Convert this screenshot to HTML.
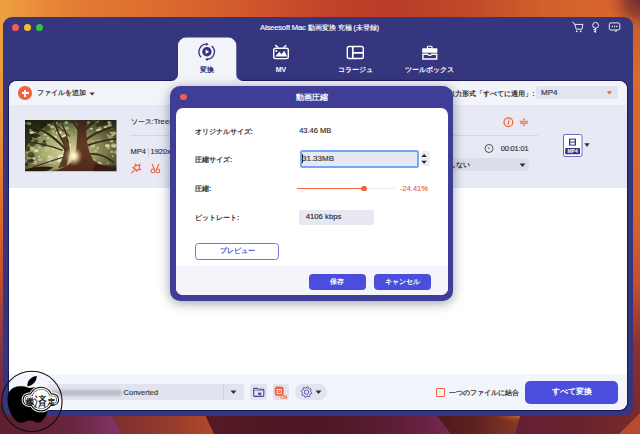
<!DOCTYPE html>
<html><head><meta charset="utf-8">
<style>
*{margin:0;padding:0;box-sizing:border-box}
html,body{width:640px;height:434px;overflow:hidden;font-family:"Liberation Sans",sans-serif;}
body{position:relative;background:#7a2a3a}
.a{position:absolute}
.t{position:absolute;white-space:nowrap;line-height:1;-webkit-text-stroke:0.15px currentColor}
.t[style*="bold"]{-webkit-text-stroke:0}
.tl{position:absolute;width:7px;height:7px;border-radius:50%}
.btn{position:absolute;background:#4b4edd;color:#fff;border-radius:4px;font-size:7px;text-align:center;font-weight:bold}
</style></head><body>
<!-- background wallpaper -->
<svg class="a" style="left:0;top:0" width="640" height="434" viewBox="0 0 640 434">
  <defs>
    <linearGradient id="gTop" x1="0" y1="0" x2="1" y2="0">
      <stop offset="0" stop-color="#eea040"/>
      <stop offset="0.06" stop-color="#e98c3a"/>
      <stop offset="0.125" stop-color="#e27a33"/>
      <stop offset="0.25" stop-color="#dc6c2e"/>
      <stop offset="0.4" stop-color="#d0552c"/>
      <stop offset="0.5" stop-color="#c4442a"/>
      <stop offset="0.62" stop-color="#b93c28"/>
      <stop offset="0.75" stop-color="#c24c2a"/>
      <stop offset="0.85" stop-color="#d0602c"/>
      <stop offset="0.94" stop-color="#d8662c"/>
      <stop offset="1" stop-color="#d0602c"/>
    </linearGradient>
    <linearGradient id="gLeft" x1="0" y1="0" x2="0" y2="1">
      <stop offset="0" stop-color="#eea040"/>
      <stop offset="0.25" stop-color="#e8903a"/>
      <stop offset="0.4" stop-color="#e0722f"/>
      <stop offset="0.5" stop-color="#da602a"/>
      <stop offset="0.6" stop-color="#c84e30"/>
      <stop offset="0.7" stop-color="#a04040"/>
      <stop offset="0.8" stop-color="#7e3448"/>
      <stop offset="0.9" stop-color="#70283a"/>
      <stop offset="1" stop-color="#5e1e2c"/>
    </linearGradient>
    <linearGradient id="gRight" x1="0" y1="0" x2="0" y2="1">
      <stop offset="0" stop-color="#d0602c"/>
      <stop offset="0.08" stop-color="#d86a2c"/>
      <stop offset="0.45" stop-color="#d4642c"/>
      <stop offset="0.62" stop-color="#c05030"/>
      <stop offset="0.78" stop-color="#8a3030"/>
      <stop offset="0.92" stop-color="#7a2a2c"/>
      <stop offset="1" stop-color="#8a3530"/>
    </linearGradient>
    <radialGradient id="gCorner" cx="1" cy="0" r="1">
      <stop offset="0" stop-color="#6a2a32" stop-opacity="1"/>
      <stop offset="0.25" stop-color="#8a3a30" stop-opacity="0.8"/>
      <stop offset="0.55" stop-color="#c05030" stop-opacity="0"/>
    </radialGradient>
    <radialGradient id="gHi" cx="0.98" cy="0.3" r="0.35">
      <stop offset="0" stop-color="#e08a30" stop-opacity="1"/>
      <stop offset="0.5" stop-color="#b85a2a" stop-opacity="0.6"/>
      <stop offset="1" stop-color="#8a3c26" stop-opacity="0"/>
    </radialGradient>
    <linearGradient id="gPur" x1="0" y1="0" x2="122" y2="0" gradientUnits="userSpaceOnUse">
      <stop offset="0" stop-color="#5e1e2e"/>
      <stop offset="0.6" stop-color="#682640"/>
      <stop offset="1" stop-color="#82366a"/>
    </linearGradient>
    <linearGradient id="gRB" x1="515" y1="0" x2="640" y2="0" gradientUnits="userSpaceOnUse">
      <stop offset="0" stop-color="#642034"/>
      <stop offset="0.5" stop-color="#68222c"/>
      <stop offset="1" stop-color="#7a2a2a"/>
    </linearGradient>
    <linearGradient id="gOr" x1="0" y1="0" x2="1" y2="0">
      <stop offset="0" stop-color="#7a2c32"/>
      <stop offset="0.6" stop-color="#963c2c"/>
      <stop offset="1" stop-color="#b24a28"/>
    </linearGradient>
    <linearGradient id="gMar" x1="0" y1="0" x2="1" y2="0">
      <stop offset="0" stop-color="#561a26"/>
      <stop offset="0.45" stop-color="#4c1622"/>
      <stop offset="0.8" stop-color="#5e1e38"/>
      <stop offset="1" stop-color="#742a52"/>
    </linearGradient>
    <linearGradient id="gBr" x1="0" y1="0" x2="1" y2="0">
      <stop offset="0" stop-color="#4a1618"/>
      <stop offset="0.5" stop-color="#5e2220"/>
      <stop offset="0.85" stop-color="#7e3424"/>
      <stop offset="1" stop-color="#8a3c26"/>
    </linearGradient>
  </defs>
  <rect x="0" y="0" width="640" height="434" fill="#6a2535"/>
  <rect x="0" y="0" width="640" height="60" fill="url(#gTop)"/>
  <rect x="0" y="30" width="10" height="404" fill="url(#gLeft)"/>
  <rect x="625" y="40" width="15" height="394" fill="url(#gRight)"/>
  <rect x="580" y="0" width="60" height="60" fill="url(#gCorner)"/>
  <!-- bottom strip -->
  <polygon points="0,404 106,404 122,434 0,434" fill="url(#gPur)"/>
  <polygon points="106,404 203,404 216,434 122,434" fill="url(#gOr)"/>
  <polygon points="200,404 428,404 451,434 214,434" fill="url(#gMar)"/>
  <polygon points="428,404 524,404 515,434 451,434" fill="url(#gBr)"/>
  <polygon points="428,404 524,404 515,434 451,434" fill="url(#gHi)"/>
  <polygon points="524,404 640,404 640,434 515,434" fill="url(#gRB)"/>
  <polygon points="640,413 640,434 619,434" fill="#b84a30"/>
</svg>

<!-- window -->
<div class="a" style="left:3px;top:17px;width:629.5px;height:399.2px;background:#35367d;border-radius:9px"></div>
<div class="tl" style="left:12px;top:23.5px;background:#f25e57"></div>
<div class="tl" style="left:24px;top:23.5px;background:#f6be2f"></div>
<div class="tl" style="left:36px;top:23.5px;background:#2ec840"></div>
<div class="t" style="left:260px;top:23.5px;color:#fff;font-size:7.7px;letter-spacing:-0.2px">Aiseesoft Mac <span style="font-size:6.8px;letter-spacing:0">動画変換 究極 (未登録)</span></div>

<!-- top right icons -->
<svg class="a" style="left:568px;top:17px" width="56" height="21" viewBox="0 0 56 21" fill="none" stroke="#fff" stroke-width="0.9">
  <path d="M4.3 5.2 L6.4 6.4 L8.3 12.2 L14 12.2 L14.9 7.4 L7 7.4" stroke-linejoin="round"/>
  <circle cx="8.7" cy="14.4" r="0.8" fill="#fff" stroke="none"/>
  <circle cx="12.7" cy="14.4" r="0.8" fill="#fff" stroke="none"/>
  <circle cx="27.6" cy="8.3" r="2.9"/>
  <path d="M27.6 11.2 V15.8 M27.6 12.6 H25.6 M27.6 14.6 H25.8" stroke-width="1"/>
  <rect x="41.3" y="5.9" width="10.5" height="7.1" rx="1.6"/>
  <path d="M46.6 13 L47.8 14.8 L48.8 13" fill="#35367d"/>
  <circle cx="44.3" cy="9.5" r="0.65" fill="#fff" stroke="none"/>
  <circle cx="46.5" cy="9.5" r="0.65" fill="#fff" stroke="none"/>
  <circle cx="48.7" cy="9.5" r="0.65" fill="#fff" stroke="none"/>
</svg>

<!-- content panel -->
<div class="a" style="left:8.5px;top:81px;width:618.3px;height:329.1px;background:#fff;border-radius:8px;overflow:hidden;box-shadow:0 0 1px 0.6px rgba(16,16,80,.75)">
  <div class="a" style="left:0;top:0;width:618px;height:24.4px;background:#f2f4fa"></div>
  <div class="a" style="left:0;top:24.4px;width:618.3px;height:82.4px;background:#e7e9f4"></div>
  <div class="a" style="left:0;top:293.4px;width:618.3px;height:34.7px;background:#f2f5fb"></div>
</div>

<!-- active tab -->
<svg class="a" style="left:170px;top:37px" width="76" height="45" viewBox="0 0 76 45">
  <path d="M8 45 L8 8.6 A8 8 0 0 1 16 0.6 L58.3 0.6 A8 8 0 0 1 66.3 8.6 L66.3 45 Z" fill="#f2f4fa"/>
  <path d="M8.1 37 A7 7 0 0 1 1.1 44 L1.1 45 L8.1 45 Z" fill="#f2f4fa"/>
  <path d="M66.2 37 A7 7 0 0 0 73.2 44 L73.2 45 L66.2 45 Z" fill="#f2f4fa"/>
</svg>
<!-- tab icons -->
<svg class="a" style="left:195px;top:40.3px" width="24" height="24" viewBox="0 0 24 24">
  <circle cx="11.9" cy="11.8" r="4.7" fill="#34357b"/>
  <path d="M10.6 9.5 L14.2 11.8 L10.6 14.1 Z" fill="#fff"/>
  <path d="M6.2 17.2 A7.6 7.6 0 0 1 11.6 4.2" fill="none" stroke="#34357b" stroke-width="1.3"/>
  <path d="M11.2 2.6 L13.6 4.3 L11.2 6 Z" fill="#34357b"/>
  <path d="M16.7 6 A7.6 7.6 0 0 1 12 19.4" fill="none" stroke="#34357b" stroke-width="1.3"/>
  <path d="M12.6 17.7 L10.2 19.4 L12.6 21.1 Z" fill="#34357b"/>
</svg>
<svg class="a" style="left:269px;top:40px" width="24" height="24" viewBox="0 0 24 24" fill="none" stroke="#fff" stroke-width="1.4">
  <rect x="4.7" y="8.3" width="14.6" height="10.3" rx="1.8"/>
  <path d="M6.3 4.9 L9.1 7.6 M17.3 5.2 L14.6 7.6"/>
  <path d="M6.2 16.6 L10.3 11.8 L12.5 14.2 L15.3 10.8 L18.2 16.6 Z" fill="#fff" stroke="none"/>
  <circle cx="7.3" cy="10.9" r="1" fill="#fff" stroke="none"/>
</svg>
<svg class="a" style="left:343px;top:40px" width="24" height="24" viewBox="0 0 24 24" fill="none" stroke="#fff" stroke-width="1.4">
  <rect x="4.3" y="6.5" width="16" height="12" rx="1.8"/>
  <path d="M9.8 6.5 V18.5 M9.8 12.9 H20.3" stroke-width="1.7"/>
</svg>
<svg class="a" style="left:418px;top:40px" width="24" height="24" viewBox="0 0 24 24">
  <rect x="9.4" y="6.2" width="4.6" height="2.6" rx="0.8" fill="none" stroke="#fff" stroke-width="1.1"/>
  <rect x="4.2" y="8.3" width="15.2" height="4.5" rx="0.6" fill="#fff"/>
  <path d="M4.9 14.3 H9.5 Q11.7 16.6 13.9 14.3 H18.7 V19 H4.9 Z" fill="none" stroke="#fff" stroke-width="1.4"/>
</svg>
<div class="t" style="left:167px;width:80px;top:66px;text-align:center;color:#34357b;font-size:7px;font-weight:bold">変換</div>
<div class="t" style="left:241px;width:80px;top:66px;text-align:center;color:#fff;font-size:7px;font-weight:bold">MV</div>
<div class="t" style="left:315px;width:80px;top:66px;text-align:center;color:#fff;font-size:7px;font-weight:bold">コラージュ</div>
<div class="t" style="left:389px;width:80px;top:66px;text-align:center;color:#fff;font-size:7px;font-weight:bold">ツールボックス</div>

<!-- header row -->
<div class="a" style="left:18.3px;top:86.2px;width:13.6px;height:13.6px;border-radius:50%;background:#f26241"></div>
<div class="a" style="left:21.6px;top:92.35px;width:7px;height:1.3px;background:#fff"></div>
<div class="a" style="left:24.45px;top:89.5px;width:1.3px;height:7px;background:#fff"></div>
<div class="t" style="left:37px;top:89.7px;color:#3a3a3a;font-size:6.85px;font-weight:bold">ファイルを追加</div>
<svg class="a" style="left:89px;top:92px" width="7" height="5"><path d="M0.5 0.5 H5.7 L3.1 3.4 Z" fill="#333"/></svg>

<div class="t" style="left:448.3px;top:90.5px;color:#333;font-size:6.8px;font-weight:bold">出力形式「すべてに適用」:</div>
<div class="a" style="left:536px;top:86px;width:81.7px;height:13.2px;background:#e2e4ef;border-radius:2px"></div>
<div class="t" style="left:541px;top:89.3px;color:#333;font-size:8px">MP4</div>
<svg class="a" style="left:606px;top:91.4px" width="7" height="5"><path d="M0.8 0.3 H6 L3.4 3.5 Z" fill="#f0603a"/></svg>

<!-- file item -->
<svg class="a" style="left:25px;top:120.3px" width="91.5" height="51.3" viewBox="0 0 91 51">
  <defs>
    <radialGradient id="glow" cx="0.45" cy="0.6" r="0.7">
      <stop offset="0" stop-color="#d8d8a0"/>
      <stop offset="0.35" stop-color="#a8aa70"/>
      <stop offset="0.7" stop-color="#62663a"/>
      <stop offset="1" stop-color="#2e3018"/>
    </radialGradient>
    <radialGradient id="sun2" cx="0.5" cy="0.5" r="0.5">
      <stop offset="0" stop-color="#fffdf0"/>
      <stop offset="0.3" stop-color="#faf0c8" stop-opacity="0.9"/>
      <stop offset="0.7" stop-color="#e8d090" stop-opacity="0.35"/>
      <stop offset="1" stop-color="#e8c080" stop-opacity="0"/>
    </radialGradient>
    <linearGradient id="trunk" x1="0" y1="0" x2="0" y2="1">
      <stop offset="0" stop-color="#38241a"/>
      <stop offset="0.5" stop-color="#643a26"/>
      <stop offset="1" stop-color="#4e2a1a"/>
    </linearGradient>
    <filter id="bl2" x="-2" y="-2" width="95" height="55" filterUnits="userSpaceOnUse"><feGaussianBlur stdDeviation="0.45"/></filter>
  </defs>
  <clipPath id="thc"><rect width="91" height="51"/></clipPath>
  <g clip-path="url(#thc)"><g filter="url(#bl2)">
  <rect x="-2" y="-2" width="95" height="55" fill="url(#glow)"/>
  <path d="M0 0 H32 Q20 5 12 14 Q5 22 0 28 Z" fill="#161a0a" opacity="0.75"/>
  <rect width="91" height="3" fill="#1c2010" opacity="0.55"/>
  <ellipse cx="6.6" cy="27.3" rx="1.1" ry="0.8" fill="#b8c080" opacity="0.50"/>
  <ellipse cx="86.2" cy="32.2" rx="1.1" ry="0.8" fill="#b8c080" opacity="0.58"/>
  <ellipse cx="26.4" cy="7.4" rx="1.5" ry="1.1" fill="#dfe4b0" opacity="0.45"/>
  <ellipse cx="52.0" cy="9.6" rx="2.3" ry="1.6" fill="#b8c080" opacity="0.43"/>
  <ellipse cx="18.7" cy="34.7" rx="1.6" ry="1.1" fill="#b8c080" opacity="0.82"/>
  <ellipse cx="32.9" cy="12.7" rx="2.4" ry="1.7" fill="#eef0d0" opacity="0.66"/>
  <ellipse cx="38.0" cy="38.6" rx="1.9" ry="1.3" fill="#eef0d0" opacity="0.83"/>
  <ellipse cx="7.1" cy="28.5" rx="2.5" ry="1.8" fill="#c8d090" opacity="0.71"/>
  <ellipse cx="25.9" cy="19.7" rx="1.0" ry="0.7" fill="#f6f4e0" opacity="0.56"/>
  <ellipse cx="26.2" cy="37.7" rx="2.6" ry="1.9" fill="#f6f4e0" opacity="0.44"/>
  <ellipse cx="74.6" cy="44.1" rx="1.7" ry="1.2" fill="#c8d090" opacity="0.71"/>
  <ellipse cx="34.6" cy="11.8" rx="1.3" ry="0.9" fill="#dfe4b0" opacity="0.41"/>
  <ellipse cx="75.6" cy="9.3" rx="1.2" ry="0.9" fill="#b8c080" opacity="0.57"/>
  <ellipse cx="14.8" cy="17.3" rx="1.0" ry="0.7" fill="#dfe4b0" opacity="0.64"/>
  <ellipse cx="86.4" cy="31.3" rx="1.4" ry="1.0" fill="#f6f4e0" opacity="0.47"/>
  <ellipse cx="23.0" cy="17.7" rx="1.2" ry="0.9" fill="#f6f4e0" opacity="0.85"/>
  <ellipse cx="42.4" cy="24.7" rx="1.2" ry="0.8" fill="#c8d090" opacity="0.73"/>
  <ellipse cx="43.6" cy="35.3" rx="1.4" ry="1.0" fill="#b8c080" opacity="0.56"/>
  <ellipse cx="27.1" cy="32.8" rx="2.5" ry="1.8" fill="#b8c080" opacity="0.57"/>
  <ellipse cx="15.2" cy="39.4" rx="2.4" ry="1.7" fill="#c8d090" opacity="0.69"/>
  <ellipse cx="73.1" cy="10.2" rx="2.3" ry="1.7" fill="#eef0d0" opacity="0.76"/>
  <ellipse cx="31.3" cy="41.2" rx="1.6" ry="1.2" fill="#c8d090" opacity="0.44"/>
  <ellipse cx="35.4" cy="36.3" rx="2.6" ry="1.9" fill="#f6f4e0" opacity="0.76"/>
  <ellipse cx="66.0" cy="8.7" rx="1.3" ry="0.9" fill="#f6f4e0" opacity="0.76"/>
  <ellipse cx="21.9" cy="29.9" rx="1.7" ry="1.2" fill="#dfe4b0" opacity="0.43"/>
  <ellipse cx="79.9" cy="6.7" rx="1.9" ry="1.4" fill="#f6f4e0" opacity="0.75"/>
  <ellipse cx="12.9" cy="31.6" rx="1.1" ry="0.8" fill="#b8c080" opacity="0.64"/>
  <ellipse cx="5.2" cy="9.8" rx="1.2" ry="0.8" fill="#f6f4e0" opacity="0.65"/>
  <ellipse cx="6.6" cy="12.3" rx="2.2" ry="1.6" fill="#eef0d0" opacity="0.80"/>
  <ellipse cx="14.1" cy="36.5" rx="1.2" ry="0.9" fill="#dfe4b0" opacity="0.84"/>
  <ellipse cx="9.5" cy="13.5" rx="2.4" ry="1.7" fill="#c8d090" opacity="0.74"/>
  <ellipse cx="86.1" cy="20.7" rx="1.9" ry="1.4" fill="#f6f4e0" opacity="0.72"/>
  <ellipse cx="41.3" cy="17.3" rx="2.7" ry="1.9" fill="#c8d090" opacity="0.68"/>
  <ellipse cx="88.2" cy="13.4" rx="2.7" ry="1.9" fill="#c8d090" opacity="0.64"/>
  <ellipse cx="89.0" cy="26.2" rx="1.8" ry="1.3" fill="#f6f4e0" opacity="0.70"/>
  <ellipse cx="28.0" cy="11.0" rx="1.3" ry="1.0" fill="#dfe4b0" opacity="0.58"/>
  <ellipse cx="31.6" cy="2.8" rx="1.1" ry="0.8" fill="#c8d090" opacity="0.59"/>
  <ellipse cx="5.0" cy="33.9" rx="1.9" ry="1.4" fill="#c8d090" opacity="0.67"/>
  <ellipse cx="63.0" cy="2.3" rx="1.5" ry="1.0" fill="#eef0d0" opacity="0.52"/>
  <ellipse cx="43.2" cy="25.6" rx="1.9" ry="1.4" fill="#eef0d0" opacity="0.44"/>
  <ellipse cx="74.4" cy="7.3" rx="1.7" ry="1.2" fill="#c8d090" opacity="0.54"/>
  <ellipse cx="21.2" cy="29.9" rx="2.3" ry="1.7" fill="#b8c080" opacity="0.58"/>
  <ellipse cx="66.8" cy="41.4" rx="1.9" ry="1.4" fill="#b8c080" opacity="0.66"/>
  <ellipse cx="58.5" cy="4.3" rx="2.1" ry="1.5" fill="#eef0d0" opacity="0.57"/>
  <ellipse cx="41.1" cy="2.6" rx="1.9" ry="1.4" fill="#dfe4b0" opacity="0.62"/>
  <ellipse cx="0.3" cy="40.7" rx="1.9" ry="1.4" fill="#b8c080" opacity="0.44"/>
  <ellipse cx="73.6" cy="43.2" rx="2.4" ry="1.7" fill="#dfe4b0" opacity="0.73"/>
  <ellipse cx="88.8" cy="25.2" rx="1.9" ry="1.3" fill="#c8d090" opacity="0.75"/>
  <ellipse cx="27.7" cy="29.0" rx="1.1" ry="0.8" fill="#c8d090" opacity="0.84"/>
  <ellipse cx="8.2" cy="38.1" rx="1.6" ry="1.2" fill="#b8c080" opacity="0.77"/>
  <ellipse cx="41.0" cy="15.4" rx="1.6" ry="1.1" fill="#c8d090" opacity="0.45"/>
  <ellipse cx="30.2" cy="16.6" rx="1.7" ry="1.2" fill="#dfe4b0" opacity="0.72"/>
  <ellipse cx="82.0" cy="14.8" rx="1.7" ry="1.2" fill="#b8c080" opacity="0.43"/>
  <ellipse cx="39.7" cy="16.1" rx="2.4" ry="1.7" fill="#f6f4e0" opacity="0.80"/>
  <ellipse cx="4.5" cy="37.3" rx="2.3" ry="1.7" fill="#c8d090" opacity="0.62"/>
  <ellipse cx="83.0" cy="28.1" rx="1.7" ry="1.2" fill="#c8d090" opacity="0.53"/>
  <ellipse cx="35.9" cy="8.5" rx="1.4" ry="1.0" fill="#f6f4e0" opacity="0.65"/>
  <ellipse cx="41.2" cy="17.0" rx="1.8" ry="1.3" fill="#b8c080" opacity="0.49"/>
  <ellipse cx="8.3" cy="17.4" rx="1.4" ry="1.0" fill="#c8d090" opacity="0.76"/>
  <ellipse cx="34.8" cy="38.0" rx="1.5" ry="1.1" fill="#eef0d0" opacity="0.62"/>
  <ellipse cx="88.1" cy="25.0" rx="2.7" ry="1.9" fill="#b8c080" opacity="0.78"/>
  <ellipse cx="88.5" cy="12.7" rx="1.3" ry="0.9" fill="#b8c080" opacity="0.84"/>
  <ellipse cx="9.9" cy="42.1" rx="2.5" ry="1.8" fill="#f6f4e0" opacity="0.44"/>
  <ellipse cx="70.7" cy="0.1" rx="2.0" ry="1.4" fill="#eef0d0" opacity="0.69"/>
  <ellipse cx="27.6" cy="6.5" rx="2.1" ry="1.5" fill="#eef0d0" opacity="0.44"/>
  <ellipse cx="23.7" cy="40.3" rx="2.0" ry="1.4" fill="#f6f4e0" opacity="0.53"/>
  <ellipse cx="28.8" cy="42.8" rx="1.9" ry="1.4" fill="#b8c080" opacity="0.51"/>
  <ellipse cx="87.4" cy="35.9" rx="1.0" ry="0.7" fill="#f6f4e0" opacity="0.80"/>
  <ellipse cx="58.9" cy="4.1" rx="1.8" ry="1.3" fill="#c8d090" opacity="0.50"/>
  <ellipse cx="67.3" cy="25.7" rx="2.7" ry="2.0" fill="#c8d090" opacity="0.74"/>
  <ellipse cx="80.9" cy="5.6" rx="2.1" ry="1.5" fill="#dfe4b0" opacity="0.62"/>
  <ellipse cx="83.9" cy="2.8" rx="2.1" ry="1.5" fill="#f6f4e0" opacity="0.42"/>
  <ellipse cx="84.8" cy="16.8" rx="2.7" ry="1.9" fill="#f6f4e0" opacity="0.41"/>
  <ellipse cx="30.2" cy="8.6" rx="1.5" ry="1.1" fill="#c8d090" opacity="0.59"/>
  <ellipse cx="34.6" cy="39.2" rx="2.4" ry="1.7" fill="#eef0d0" opacity="0.42"/>
  <ellipse cx="69.8" cy="2.1" rx="1.1" ry="0.8" fill="#eef0d0" opacity="0.52"/>
  <ellipse cx="23.9" cy="36.5" rx="1.5" ry="1.1" fill="#eef0d0" opacity="0.72"/>
  <ellipse cx="5.9" cy="42.1" rx="2.3" ry="1.6" fill="#f6f4e0" opacity="0.83"/>
  <ellipse cx="35.2" cy="12.8" rx="1.9" ry="1.3" fill="#f6f4e0" opacity="0.48"/>
  <ellipse cx="70.3" cy="31.0" rx="1.6" ry="1.1" fill="#c8d090" opacity="0.75"/>
  <ellipse cx="43.8" cy="27.8" rx="1.8" ry="1.3" fill="#eef0d0" opacity="0.84"/>
  <ellipse cx="24.1" cy="4.3" rx="1.9" ry="1.3" fill="#f6f4e0" opacity="0.48"/>
  <ellipse cx="21.4" cy="27.5" rx="2.4" ry="1.7" fill="#c8d090" opacity="0.53"/>
  <ellipse cx="83.2" cy="2.1" rx="1.2" ry="0.9" fill="#dfe4b0" opacity="0.67"/>
  <ellipse cx="75.3" cy="9.9" rx="1.9" ry="1.4" fill="#dfe4b0" opacity="0.60"/>
  <ellipse cx="9.6" cy="30.4" rx="1.4" ry="1.0" fill="#c8d090" opacity="0.55"/>
  <ellipse cx="74.5" cy="20.9" rx="2.1" ry="1.5" fill="#eef0d0" opacity="0.49"/>
  <ellipse cx="72.4" cy="28.0" rx="1.2" ry="0.8" fill="#f6f4e0" opacity="0.70"/>
  <ellipse cx="14.1" cy="27.2" rx="1.7" ry="1.2" fill="#c8d090" opacity="0.58"/>
  <ellipse cx="28.4" cy="28.9" rx="1.7" ry="1.2" fill="#c8d090" opacity="0.69"/>
  <ellipse cx="39.5" cy="8.0" rx="1.1" ry="0.8" fill="#b8c080" opacity="0.80"/>
  <ellipse cx="41.9" cy="8.3" rx="2.0" ry="1.4" fill="#f6f4e0" opacity="0.44"/>
  <ellipse cx="84.2" cy="5.5" rx="2.4" ry="1.7" fill="#dfe4b0" opacity="0.54"/>
  <ellipse cx="28.6" cy="31.0" rx="1.1" ry="0.8" fill="#b8c080" opacity="0.71"/>
  <ellipse cx="43.0" cy="28.8" rx="2.7" ry="1.9" fill="#dfe4b0" opacity="0.57"/>
  <ellipse cx="10.7" cy="30.6" rx="2.1" ry="1.5" fill="#c8d090" opacity="0.69"/>
  <ellipse cx="28.0" cy="12.7" rx="1.6" ry="1.2" fill="#b8c080" opacity="0.60"/>
  <ellipse cx="2.1" cy="31.6" rx="1.4" ry="1.0" fill="#b8c080" opacity="0.75"/>
  <ellipse cx="3.7" cy="32.5" rx="2.3" ry="1.7" fill="#b8c080" opacity="0.44"/>
  <ellipse cx="71.4" cy="1.3" rx="2.1" ry="1.5" fill="#eef0d0" opacity="0.49"/>
  <ellipse cx="25.0" cy="41.6" rx="1.9" ry="1.4" fill="#f6f4e0" opacity="0.49"/>
  <ellipse cx="23.9" cy="25.8" rx="1.0" ry="0.7" fill="#dfe4b0" opacity="0.58"/>
  <ellipse cx="34.3" cy="40.4" rx="2.4" ry="1.7" fill="#eef0d0" opacity="0.69"/>
  <ellipse cx="90.4" cy="32.1" rx="2.4" ry="1.7" fill="#c8d090" opacity="0.57"/>
  <ellipse cx="87.2" cy="15.1" rx="1.5" ry="1.1" fill="#b8c080" opacity="0.82"/>
  <ellipse cx="20.2" cy="14.8" rx="1.7" ry="1.2" fill="#c8d090" opacity="0.80"/>
  <ellipse cx="85.2" cy="12.4" rx="1.2" ry="0.8" fill="#dfe4b0" opacity="0.79"/>
  <ellipse cx="71.2" cy="20.5" rx="1.0" ry="0.7" fill="#b8c080" opacity="0.80"/>
  <ellipse cx="0.0" cy="3.1" rx="1.3" ry="0.9" fill="#dfe4b0" opacity="0.43"/>
  <ellipse cx="85.6" cy="7.3" rx="2.1" ry="1.5" fill="#b8c080" opacity="0.69"/>
  <ellipse cx="37.8" cy="31.3" rx="1.1" ry="0.8" fill="#eef0d0" opacity="0.85"/>
  <ellipse cx="7.3" cy="33.4" rx="2.8" ry="2.0" fill="#c8d090" opacity="0.50"/>
  <ellipse cx="24.2" cy="28.2" rx="2.4" ry="1.7" fill="#b8c080" opacity="0.84"/>
  <ellipse cx="82.3" cy="42.9" rx="1.3" ry="0.9" fill="#c8d090" opacity="0.49"/>
  <ellipse cx="35.4" cy="30.7" rx="2.5" ry="1.8" fill="#b8c080" opacity="0.61"/>
  <ellipse cx="39.8" cy="37.0" rx="1.5" ry="1.1" fill="#dfe4b0" opacity="0.58"/>
  <ellipse cx="3.9" cy="3.5" rx="2.5" ry="1.8" fill="#c8d090" opacity="0.49"/>
  <ellipse cx="34.9" cy="12.6" rx="1.0" ry="0.7" fill="#eef0d0" opacity="0.77"/>
  <ellipse cx="8.9" cy="38.6" rx="1.6" ry="1.1" fill="#f6f4e0" opacity="0.52"/>
  <ellipse cx="67.9" cy="40.2" rx="1.9" ry="1.4" fill="#eef0d0" opacity="0.56"/>
  <ellipse cx="44.7" cy="25.1" rx="1.3" ry="0.9" fill="#f6f4e0" opacity="0.67"/>
  <ellipse cx="87.1" cy="26.3" rx="1.3" ry="0.9" fill="#dfe4b0" opacity="0.82"/>
  <ellipse cx="67.8" cy="21.5" rx="1.7" ry="1.2" fill="#c8d090" opacity="0.52"/>
  <ellipse cx="82.0" cy="25.6" rx="2.6" ry="1.8" fill="#dfe4b0" opacity="0.82"/>
  <ellipse cx="11.5" cy="30.3" rx="2.1" ry="1.5" fill="#eef0d0" opacity="0.56"/>
  <ellipse cx="39.9" cy="39.4" rx="1.2" ry="0.9" fill="#f6f4e0" opacity="0.69"/>
  <ellipse cx="27.5" cy="15.2" rx="1.2" ry="0.8" fill="#eef0d0" opacity="0.53"/>
  <ellipse cx="16.5" cy="6.3" rx="2.0" ry="1.6" fill="#1a1e0c" opacity="0.68"/>
  <ellipse cx="75.7" cy="46.3" rx="2.0" ry="1.6" fill="#1a1e0c" opacity="0.49"/>
  <ellipse cx="18.7" cy="24.3" rx="3.1" ry="2.5" fill="#1a1e0c" opacity="0.55"/>
  <ellipse cx="9.9" cy="15.5" rx="3.4" ry="2.7" fill="#1a1e0c" opacity="0.79"/>
  <ellipse cx="90.5" cy="49.0" rx="1.8" ry="1.5" fill="#1a1e0c" opacity="0.77"/>
  <ellipse cx="6.3" cy="40.7" rx="2.8" ry="2.2" fill="#1a1e0c" opacity="0.69"/>
  <ellipse cx="13.9" cy="15.5" rx="1.7" ry="1.3" fill="#1a1e0c" opacity="0.63"/>
  <ellipse cx="19.1" cy="3.7" rx="2.7" ry="2.2" fill="#1a1e0c" opacity="0.63"/>
  <ellipse cx="10.8" cy="21.4" rx="2.4" ry="2.0" fill="#1a1e0c" opacity="0.62"/>
  <ellipse cx="22.4" cy="8.4" rx="3.0" ry="2.4" fill="#1a1e0c" opacity="0.46"/>
  <ellipse cx="73.6" cy="4.8" rx="3.0" ry="2.4" fill="#1a1e0c" opacity="0.46"/>
  <ellipse cx="19.4" cy="21.2" rx="1.7" ry="1.4" fill="#1a1e0c" opacity="0.66"/>
  <ellipse cx="22.9" cy="2.7" rx="2.2" ry="1.8" fill="#1a1e0c" opacity="0.60"/>
  <ellipse cx="10.7" cy="9.8" rx="1.8" ry="1.4" fill="#1a1e0c" opacity="0.79"/>
  <ellipse cx="8.0" cy="50.8" rx="2.6" ry="2.1" fill="#1a1e0c" opacity="0.56"/>
  <ellipse cx="4.2" cy="41.9" rx="3.0" ry="2.4" fill="#1a1e0c" opacity="0.42"/>
  <ellipse cx="79.7" cy="4.2" rx="2.8" ry="2.2" fill="#1a1e0c" opacity="0.65"/>
  <ellipse cx="1.2" cy="44.5" rx="2.1" ry="1.7" fill="#1a1e0c" opacity="0.68"/>
  <ellipse cx="1.9" cy="28.9" rx="3.3" ry="2.7" fill="#1a1e0c" opacity="0.60"/>
  <ellipse cx="6.1" cy="34.7" rx="3.5" ry="2.8" fill="#1a1e0c" opacity="0.66"/>
  <ellipse cx="7.5" cy="24.1" rx="2.8" ry="2.2" fill="#1a1e0c" opacity="0.57"/>
  <ellipse cx="81.0" cy="46.6" rx="1.6" ry="1.3" fill="#1a1e0c" opacity="0.42"/>
  <g stroke="#3e2818" fill="none" stroke-linecap="round">
    <path d="M58 22 Q68 12 90 6" stroke-width="2.2"/>
    <path d="M60 26 Q76 20 90 19" stroke-width="1.6"/>
    <path d="M57 14 Q64 4 72 0" stroke-width="2.2"/>
    <path d="M54 12 Q50 4 46 0" stroke-width="1.8"/>
    <path d="M41 30 Q27 14 12 8" stroke-width="2"/>
    <path d="M39 24 Q31 10 29 0" stroke-width="1.6"/>
    <path d="M37 30 Q21 24 4 22" stroke-width="1.3"/>
    <path d="M62 34 Q76 32 88 42" stroke-width="1.6"/>
    <path d="M44 16 Q36 6 20 2" stroke-width="1.2"/>
    <path d="M38 37 Q24 41 8 47" stroke-width="1.2"/>
    <path d="M43 22 Q41 12 37 4" stroke-width="1.2"/>
  </g>
  <path d="M52 0 H62 Q60 10 61.5 20 Q63 32 68 40 Q76 46 91 49 V51 H26 Q40 48 46 42 Q51 34 51.5 22 Q52.5 10 52 0 Z" fill="url(#trunk)"/>
  <path d="M41 46 L44.5 34 Q45.5 26 41 16 L36.5 18 Q40 28 38 36 L33 48 Z" fill="#50301e" opacity="0.9"/>
  <path d="M0 49 Q14 45 28 47 Q22 53 0 53 Z" fill="#2a1c10"/>
  <path d="M70 44 Q82 46 93 45 V53 H66 Z" fill="#2a1810" opacity="0.7"/>
  </g></g>
  <ellipse cx="48.5" cy="36" rx="9" ry="10" fill="url(#sun2)"/>
</svg>

<div class="t" style="left:130.5px;top:118px;color:#333;font-size:7.7px"><span style="font-size:6.8px">ソース</span>:Trees</div>
<div class="a" style="left:130px;top:135px;width:408px;height:1px;background:#d4d6e2"></div>
<div class="t" style="left:130.5px;top:148px;color:#333;font-size:7.5px">MP4</div>
<div class="a" style="left:147.5px;top:147.5px;width:0.8px;height:8px;background:#c8c8d0"></div>
<div class="t" style="left:150.5px;top:148px;color:#333;font-size:7.5px">1920x</div>
<svg class="a" style="left:128px;top:160px" width="36" height="16" viewBox="0 0 36 16" fill="none" stroke="#f5603a" stroke-width="1.1" stroke-linejoin="round" stroke-linecap="round">
  <path d="M7.3 4 L9.4 5.8 L12.1 4.3 L11.1 7.1 L12.6 9.8 L9.7 9.4 L8.4 11.4 L7.5 8.9 L4.6 7.7 L7.3 6.6 Z"/>
  <path d="M6.8 9.8 L3.8 12.6"/>
  <circle cx="24.9" cy="10.9" r="1.9"/><circle cx="29.8" cy="10.9" r="1.9"/>
  <path d="M24.2 4.3 Q25.4 7.3 26.3 9.4 M30.8 4.3 Q29.4 7.3 28.5 9.4"/>
</svg>

<!-- right side of item -->
<svg class="a" style="left:498px;top:114px" width="36" height="16" viewBox="0 0 36 16">
  <circle cx="10.4" cy="8.2" r="4.4" fill="none" stroke="#f5603a" stroke-width="1.25"/>
  <circle cx="11" cy="5.9" r="0.7" fill="#f5603a"/>
  <path d="M10.8 7.1 L10.1 10.4" stroke="#f5603a" stroke-width="1.1" stroke-linecap="round"/>
  <path d="M21.9 7.3 H29.8 M21.9 9.1 H29.8" stroke="#f5603a" stroke-width="1.1"/>
  <circle cx="25.9" cy="5.3" r="0.85" fill="#f5603a"/>
  <circle cx="25.9" cy="11.2" r="0.85" fill="#f5603a"/>
</svg>
<svg class="a" style="left:483px;top:143px" width="12" height="12" viewBox="0 0 12 12" fill="none" stroke="#444" stroke-width="0.9">
  <circle cx="6" cy="5.5" r="4"/>
  <path d="M5.3 4.6 L6.4 5.7" stroke-width="1.1"/>
</svg>
<div class="t" style="left:500.8px;top:145px;color:#333;font-size:7.5px;letter-spacing:-0.2px">00:01:01</div>
<div class="a" style="left:440px;top:157.8px;width:88.6px;height:13.6px;background:#dcdcea;border-radius:2.5px"></div>
<div class="t" style="left:448.8px;top:160.8px;color:#333;font-size:7px;font-weight:bold">しない</div>
<svg class="a" style="left:518.5px;top:162.9px" width="7" height="5"><path d="M0.5 0.5 H6.5 L3.5 4 Z" fill="#333"/></svg>

<svg class="a" style="left:562px;top:133px" width="22" height="25" viewBox="0 0 22 25">
  <rect x="1.5" y="1.5" width="18.5" height="22" rx="1.5" fill="#fff" stroke="#6e6ec8" stroke-width="1"/>
  <rect x="7" y="5.6" width="7" height="7" fill="#34357b"/>
  <rect x="8.3" y="6.6" width="4.4" height="2" fill="#fff"/>
  <rect x="8.3" y="9.6" width="4.4" height="2" fill="#fff"/>
  <rect x="3.2" y="15" width="14.8" height="6.2" rx="0.6" fill="#34357b"/>
  <text x="10.6" y="20.2" font-size="5" font-family="Liberation Sans" font-weight="bold" fill="#fff" text-anchor="middle">MP4</text>
</svg>
<svg class="a" style="left:584px;top:143.4px" width="7" height="5"><path d="M0.3 0.3 H5.7 L3 3.9 Z" fill="#333"/></svg>

<!-- bottom bar -->
<div class="a" style="left:46.5px;top:384px;width:197.5px;height:15.8px;background:#e1e3ee;border-radius:2px"></div>
<div class="a" style="left:50px;top:389.5px;width:72px;height:6px;background:#bcbcc8;filter:blur(1.5px);border-radius:3px"></div>
<div class="t" style="left:123.6px;top:389px;color:#3a3a3a;font-size:7.5px">Converted</div>
<div class="a" style="left:223px;top:384px;width:1px;height:15.8px;background:#d0d2de"></div>
<svg class="a" style="left:230px;top:390px" width="7" height="5"><path d="M0.5 0.5 H6.5 L3.5 4 Z" fill="#333"/></svg>

<div class="a" style="left:249.7px;top:384.2px;width:17px;height:15.8px;background:#e1e3ee;border-radius:2px"></div>
<div class="a" style="left:272.6px;top:384.2px;width:16.4px;height:15.5px;background:#e1e3ee;border-radius:2px"></div>
<svg class="a" style="left:248px;top:382px" width="44" height="20" viewBox="0 0 44 20">
  <path d="M5.7 7 Q5.7 6.4 6.3 6.4 H9.2 L10.2 7.3 H15.2 Q15.8 7.3 15.8 7.9 V13.8 Q15.8 14.4 15.2 14.4 H6.3 Q5.7 14.4 5.7 13.8 Z" fill="none" stroke="#4a4a92" stroke-width="1.1" stroke-linejoin="round"/>
  <path d="M5.7 8.3 H15.8" stroke="#4a4a92" stroke-width="0.5"/>
  <rect x="10.2" y="10.6" width="3" height="2.4" fill="#4a4a92"/>
  <rect x="27.2" y="5" width="8" height="8.5" rx="1.2" fill="#f5603a"/>
  <path d="M28.3 4.2 V5.5 M30 4.2 V5.5 M31.7 4.2 V5.5 M33.4 4.2 V5.5 M28.3 13 V14.3 M30 13 V14.3 M31.7 13 V14.3 M33.4 13 V14.3 M26.4 6.3 H27.6 M26.4 8 H27.6 M26.4 9.7 H27.6 M26.4 11.4 H27.6 M34.8 6.3 H36 M34.8 8 H36 M34.8 9.7 H36 M34.8 11.4 H36" stroke="#f5603a" stroke-width="0.8"/>
  <rect x="29.2" y="7.4" width="4" height="4" fill="none" stroke="#fff" stroke-width="0.8"/>
  <circle cx="31.2" cy="9.4" r="0.6" fill="#fff"/>
  <text x="32.4" y="16.6" font-size="4.6" font-family="Liberation Sans" fill="#f5603a" stroke="#f5603a" stroke-width="0.15">ON</text>
</svg>
<div class="a" style="left:295.2px;top:384.2px;width:31.5px;height:16px;background:#e1e3ee;border-radius:8px"></div>
<svg class="a" style="left:299px;top:386px" width="15" height="13" viewBox="0 0 15 13" fill="none" stroke="#5050a8" stroke-width="0.95" stroke-linejoin="round">
  <path d="M8.02 0.83 L9.04 1.03 L9.48 2.40 L10.16 2.85 L11.60 2.74 L12.17 3.60 L11.52 4.88 L11.68 5.69 L12.77 6.62 L12.57 7.64 L11.20 8.08 L10.75 8.76 L10.86 10.20 L10.00 10.77 L8.72 10.12 L7.91 10.28 L6.98 11.37 L5.96 11.17 L5.52 9.80 L4.84 9.35 L3.40 9.46 L2.83 8.60 L3.48 7.32 L3.32 6.51 L2.23 5.58 L2.43 4.56 L3.80 4.12 L4.25 3.44 L4.14 2.00 L5.00 1.43 L6.28 2.08 L7.09 1.92 Z"/>
  <circle cx="7.5" cy="6.1" r="2.2"/>
</svg>
<svg class="a" style="left:315px;top:390px" width="7" height="5"><path d="M0.5 0.5 H6.5 L3.5 4 Z" fill="#333"/></svg>

<div class="a" style="left:436.2px;top:388.2px;width:9.1px;height:8.7px;border:1.3px solid #f5603a;border-radius:1px;background:#f4f5fa"></div>
<div class="t" style="left:448.5px;top:389px;color:#3a3a3a;font-size:7.25px;font-weight:bold">一つのファイルに結合</div>
<div class="btn" style="left:525.2px;top:381px;width:93.2px;height:22.5px;border-radius:5px;font-size:8px;line-height:22.3px">すべて変換</div>

<!-- dialog -->
<div class="a" style="left:170px;top:86px;width:283px;height:215px;background:#3e3e98;border-radius:10px;box-shadow:0 2px 12px rgba(0,0,0,.38)"></div>
<div class="tl" style="left:180px;top:93.8px;background:#f25e57;width:6.5px;height:6.5px"></div>
<div class="t" style="left:170px;width:283px;top:93.6px;text-align:center;color:#fff;font-size:7.8px;font-weight:bold">動画圧縮</div>
<div class="a" style="left:176.3px;top:108px;width:271.3px;height:186.5px;background:#fff;border-radius:7px;overflow:hidden">
  <div class="a" style="left:0;top:157.5px;width:272px;height:30px;background:#f3f5fb"></div>
</div>
<div class="t" style="left:194.5px;top:127.5px;color:#333;font-size:7px;font-weight:bold">オリジナルサイズ:</div>
<div class="t" style="left:299.2px;top:126.6px;color:#2a2a2a;font-size:7.5px">43.46 MB</div>
<div class="t" style="left:194.9px;top:156px;color:#333;font-size:7px;font-weight:bold">圧縮サイズ:</div>
<div class="a" style="left:300px;top:149.6px;width:119px;height:18px;background:#e8e8f2;border:2px solid #74a8f4;border-radius:2.5px"></div>
<div class="t" style="left:302px;top:155px;color:#333;font-size:8px">31.33MB</div>
<div class="a" style="left:302.2px;top:154.4px;width:0.8px;height:8.2px;background:#222"></div>
<div class="a" style="left:420.8px;top:151px;width:9px;height:14.5px;background:#ededf4;border-radius:1.5px"></div>
<svg class="a" style="left:420px;top:150px" width="10" height="17"><path d="M1.3 7.1 L4.1 4.1 L6.9 7.1 Z M1.3 10.7 L4.1 13.7 L6.9 10.7 Z" fill="#222"/></svg>
<div class="t" style="left:194.9px;top:185px;color:#333;font-size:7px;font-weight:bold">圧縮:</div>
<div class="a" style="left:297.2px;top:187.8px;width:67px;height:1.7px;background:#f5603a"></div>
<div class="a" style="left:364.2px;top:187.8px;width:30.6px;height:1.7px;background:#ebebf3"></div>
<div class="a" style="left:361.4px;top:185.9px;width:5.6px;height:5.6px;border-radius:50%;background:#f5603a"></div>
<div class="t" style="left:400px;top:184.5px;color:#f0603a;font-size:7.5px">-24.41%</div>
<div class="t" style="left:194.9px;top:214px;color:#333;font-size:7px;font-weight:bold">ビットレート:</div>
<div class="a" style="left:299px;top:210px;width:75px;height:14.6px;background:#e8e8f2;border-radius:2px"></div>
<div class="t" style="left:305.8px;top:213.4px;color:#2a2a2a;font-size:7.7px">4106 kbps</div>
<div class="a" style="left:195.3px;top:243.4px;width:83.9px;height:16.6px;border:1.2px solid #7474ec;border-radius:3.5px;background:#fff;color:#5050d8;font-size:7px;font-weight:bold;text-align:center;line-height:14.4px">プレビュー</div>
<div class="btn" style="left:308.7px;top:273.5px;width:57px;height:16px;line-height:16px">保存</div>
<div class="btn" style="left:374.2px;top:273.5px;width:56.5px;height:16px;line-height:16px">キャンセル</div>

<!-- apple stamp watermark -->
<svg class="a" style="left:0;top:368px" width="66" height="66" viewBox="0 0 66 66">
  <circle cx="31.9" cy="33.4" r="30.2" fill="none" stroke="#111" stroke-width="1.1"/>
  <path d="M27.8 19.6 C24 18 18 17.6 13.5 19.8 C9 22 7.2 27 7.6 33 C8 41 12 50 17 53.5 C19.5 55.3 22 55 24.5 54 C27 53 29 52.5 30 52.5 C32 52.6 34 53.3 36 54.2 C38.5 55.2 41 54.5 43 52 C45 49.5 46.5 47 47.5 44 L46 28 C44 22 41 19.5 37 19.3 C33 19.2 30.5 20.6 27.8 19.6 Z" fill="#000"/>
  <path d="M27.2 18.2 C27.3 12.5 31 8.2 36.8 7.9 C36.6 13.5 32.8 17.6 27.2 18.2 Z" fill="#000"/>
  <g fill="#fff" opacity="0.9">
    <ellipse cx="41" cy="31" rx="12.9" ry="13.3"/>
    <rect x="21.6" y="24.5" width="38.5" height="14.4" rx="7.2"/>
  </g>
  <g fill="#000">
    <ellipse cx="41" cy="31" rx="11.9" ry="12.3"/>
    <rect x="22.6" y="25.5" width="36.5" height="12.4" rx="6.2"/>
  </g>
  <g fill="#fff">
    <ellipse cx="41" cy="31" rx="10.9" ry="11.3"/>
    <rect x="23.6" y="26.5" width="34.5" height="10.4" rx="5.2"/>
  </g>
  <g fill="#333">
    <ellipse cx="41" cy="31" rx="9.7" ry="10.1"/>
    <rect x="24.8" y="27.7" width="32.1" height="8" rx="4"/>
  </g>
  <g fill="#fff">
    <ellipse cx="41" cy="31" rx="9.1" ry="9.5"/>
    <rect x="25.4" y="28.3" width="30.9" height="6.8" rx="3.4"/>
  </g>
  <g fill="#111" font-family="Liberation Sans">
    <text x="26" y="36.1" font-size="7.6" stroke="#111" stroke-width="0.3">鑑</text>
    <text x="34.2" y="37.8" font-size="12.6" stroke="#111" stroke-width="0.2">済</text>
    <text x="47.8" y="36" font-size="7.4" stroke="#111" stroke-width="0.3">定</text>
  </g>
</svg>
</body></html>
